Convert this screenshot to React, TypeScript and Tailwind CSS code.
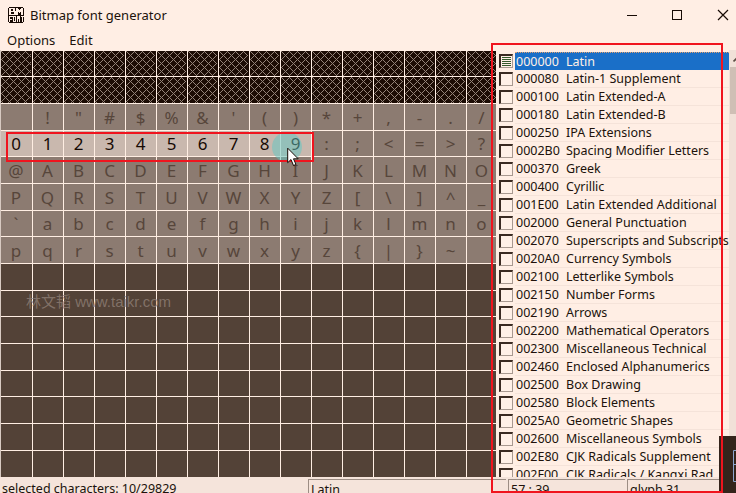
import React from "react";

const HATCH = "HATCH";
type Entry = [code: string, name: string];

const blocks: Entry[] = [
  ["000000", "Latin"],
  ["000080", "Latin-1 Supplement"],
  ["000100", "Latin Extended-A"],
  ["000180", "Latin Extended-B"],
  ["000250", "IPA Extensions"],
  ["0002B0", "Spacing Modifier Letters"],
  ["000370", "Greek"],
  ["000400", "Cyrillic"],
  ["001E00", "Latin Extended Additional"],
  ["002000", "General Punctuation"],
  ["002070", "Superscripts and Subscripts"],
  ["0020A0", "Currency Symbols"],
  ["002100", "Letterlike Symbols"],
  ["002150", "Number Forms"],
  ["002190", "Arrows"],
  ["002200", "Mathematical Operators"],
  ["002300", "Miscellaneous Technical"],
  ["002460", "Enclosed Alphanumerics"],
  ["002500", "Box Drawing"],
  ["002580", "Block Elements"],
  ["0025A0", "Geometric Shapes"],
  ["002600", "Miscellaneous Symbols"],
  ["002E80", "CJK Radicals Supplement"],
  ["002F00", "CJK Radicals / Kangxi Rad"],
];

const rows: string[] = [
  HATCH,
  HATCH,
  " !\"#$%&'()*+,-./",
  "0123456789:;<=>?",
  "@ABCDEFGHIJKLMNO",
  "PQRSTUVWXYZ[\\]^_",
  "`abcdefghijklmno",
  "pqrstuvwxyz{|}~ ",
  "", "", "", "", "", "", "", "",
];

function Hatch({ id }: { id: string }) {
  return (
    <svg className="block h-full w-full" shapeRendering="crispEdges" aria-hidden>
      <pattern id={id} width="8" height="8" patternUnits="userSpaceOnUse">
        <rect width="8" height="8" fill="#1c0c04" />
        <path
          fill="#948378"
          d="M0 0h1v1h-1zM1 1h1v1h-1zM2 2h1v1h-1zM3 3h1v1h-1zM4 4h1v1h-1zM5 5h1v1h-1zM6 6h1v1h-1zM7 7h1v1h-1zM7 1h1v1h-1zM6 2h1v1h-1zM5 3h1v1h-1zM3 5h1v1h-1zM2 6h1v1h-1zM1 7h1v1h-1z"
        />
      </pattern>
      <rect width="100%" height="100%" fill={`url(#${id})`} />
    </svg>
  );
}

function Cell({ row, col }: { row: number; col: number }) {
  const text = rows[row];
  const selected = row === 3 && col < 10;
  const tone =
    text === HATCH
      ? "bg-[#1c0c04]"
      : selected
        ? "bg-[#c9b8ae] text-[#170a04]"
        : text
          ? "bg-[#8c7b71] text-[#57463b]"
          : "bg-[#534237]";
  return (
    <div
      className={`flex min-w-0 items-center justify-center overflow-hidden border-t border-r border-[#ffeee3] pr-[1px] text-[17px] leading-none ${tone}`}
    >
      {text === HATCH ? <Hatch id={`hatch-${row}-${col}`} /> : <span className="whitespace-pre">{text[col] ?? ""}</span>}
    </div>
  );
}

function CheckBox({ partial }: { partial: boolean }) {
  return (
    <span className="block h-[14px] w-[14px] shrink-0 border-t-2 border-l-2 border-r border-b border-t-[#3a2a22] border-l-[#3a2a22] border-r-[#a89990] border-b-[#a89990] bg-[#fff0e7]">
      {partial && (
        <svg width="11" height="11" viewBox="0 0 11 11" shapeRendering="crispEdges" aria-hidden>
          <path d="M1 1.5h9M1 3.5h9M1 5.5h9M1 7.5h9M1 9.5h9" stroke="#365a2c" strokeWidth="1" />
        </svg>
      )}
    </span>
  );
}

function Logo() {
  return (
    <svg width="16" height="16" viewBox="0 0 16 16" shapeRendering="crispEdges" aria-hidden>
      <path fill="#170a04" d="M1 0h14v1h1v14h-1v1h-14v-1h-1v-14h1z" />
      <g stroke="#ffeee4" fill="none">
        <path strokeWidth="1.5" d="M2.2 1v7M2 1.7h4v2.6M2 4.6h5v2.8h-5M9.2 8.2v-7M9 2l2.5 2.5 2.5-2.5M13.8 1.2v7" />
        <path strokeWidth="1" d="M1.5 15v-5.500h3M1.500 12.500h2M5.500 10.500v4h2v-5h-2zM9.500 15v-5.500h1l1 4v1.500M11.500 9v6M13 9.500h2.500M14.500 9v6" />
      </g>
    </svg>
  );
}

export default function App() {
  return (
    <div className="relative flex h-[493px] w-[736px] flex-col overflow-hidden bg-[#ffeee4] font-['Noto_Sans','Noto_Sans_CJK_SC',sans-serif] text-[#20120b]">
      <header className="flex h-[30px] shrink-0 items-center pl-2">
        <Logo />
        <h1 className="ml-[6px] text-[13px] leading-4">Bitmap font generator</h1>
        <svg className="ml-auto mr-[7px]" width="103" height="12" viewBox="0 0 103 12" fill="none" stroke="#170a04" aria-hidden>
          <path d="M1 6.500h10M46.500 1.500h9v9h-9z" shapeRendering="crispEdges" />
          <path d="M92 1l10 10M102 1l-10 10" strokeWidth="1.200" />
        </svg>
      </header>
      <nav className="flex h-[20px] shrink-0 items-center pl-[7px] text-[13px] leading-4">
        <span>Options</span>
        <span className="ml-[14px]">Edit</span>
      </nav>

      <main className="flex h-[427px] shrink-0">
        <div className="grid w-[496px] shrink-0 grid-cols-[32px_repeat(15,31px)] grid-rows-[26px_27px_27px_26px_27px_27px_26px_27px_27px_26px_27px_27px_26px_27px_27px_27px] border-l border-[#d8cac2] overflow-hidden [grid-template-columns:31px_repeat(15,31px)]">
          {rows.map((_, row) => Array.from({ length: 16 }, (_, col) => <Cell key={`${row}-${col}`} row={row} col={col} />))}
        </div>
        <div className="w-[233px] shrink-0 overflow-hidden pt-[2px] pl-[3px]">
          {blocks.map(([code, name], i) => (
            <div key={code} className="flex h-[18px] items-center">
              <CheckBox partial={i === 0} />
              <div
                className={`ml-[2px] flex h-[18px] min-w-0 flex-1 items-center pl-[1px] text-[12.500px] leading-[18px] whitespace-nowrap ${
                  i === 0 ? "border-t border-dotted border-[#e0a070] bg-[#1a6fc8] text-[#fff0e6]" : "border-b border-[#f5e3d9]"
                }`}
              >
                <span className="w-[50px] shrink-0">{code}</span>
                <span>{name}</span>
              </div>
            </div>
          ))}
        </div>
        <div className="flex flex-1 flex-col bg-[#f1e1d8]">
          <svg className="mt-[6px] ml-[4px] h-[11px] shrink-0" width="7" height="11" viewBox="0 0 7 11" fill="none" stroke="#5c4c43" strokeWidth="1.600" aria-hidden>
            <path d="M0.500 5.500l3-3 3 3" />
          </svg>
          <div className="ml-[1px] h-[47px] bg-[#cfbfb5]" />
        </div>
      </main>

      <footer className="flex min-h-0 flex-1 gap-[2px] bg-[#f5e4db] pt-[2px] text-[12.500px] leading-[20px]">
        <div className="w-[306px] shrink-0 pl-[2px]">selected characters: 10/29829</div>
        <div className="w-[198px] shrink-0 border-t border-l border-[#9c8d84] pl-[2px]">Latin</div>
        <div className="w-[117px] shrink-0 border-t border-l border-[#9c8d84] pl-[2px]">57 : 39</div>
        <div className="flex-1 border-t border-l border-[#9c8d84] pl-[2px]">glyph 31</div>
      </footer>

      <p className="absolute top-[292px] left-[26px] font-['Liberation_Sans','Noto_Sans_CJK_SC',sans-serif] text-[15px] leading-5 whitespace-nowrap text-[#8f7f75]/80">
        林文韬 www.taikr.com
      </p>
      <div className="absolute top-[436px] left-[719px] h-[57px] w-[17px] overflow-hidden bg-[#34241b]">
        <svg className="mt-[14px] ml-[14px]" width="10" height="32" fill="none" stroke="#8ba5cd" aria-hidden>
          <path d="M10 .5H.5v31H10M.5 14.500H10" />
        </svg>
      </div>
      <div className="absolute top-[132px] left-[272px] h-[30px] w-[30px] rounded-full bg-[#5fc8c3]/50" />
      <div className="absolute top-[132px] left-[6px] h-[30px] w-[308px] border-2 border-[#f0141e]" />
      <div className="absolute top-[43px] left-[491px] h-[450px] w-[232px] border-2 border-[#f0141e]" />
      <svg className="absolute top-[147px] left-[287px]" width="13" height="20" viewBox="0 0 13 20" aria-hidden>
        <path d="M.7 1.200v14.500l3.300-3.200 2.500 6 2.500-1-2.500-5.700h4.700z" fill="#fff" stroke="#170a04" />
      </svg>
    </div>
  );
}
